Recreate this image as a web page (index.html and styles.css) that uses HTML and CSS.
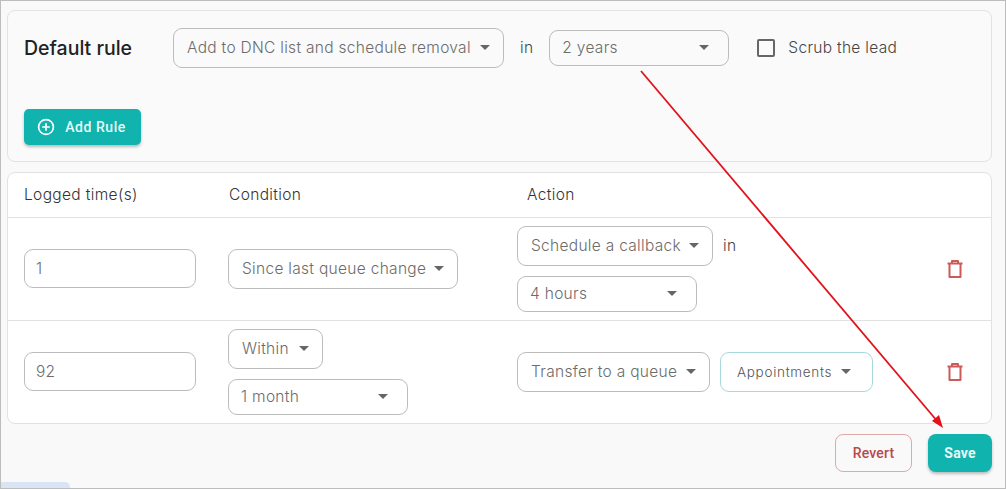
FILE: index.html
```html
<!DOCTYPE html>
<html lang="en">
<head>
    <meta charset="UTF-8">
    <meta name="viewport" content="width=device-width, initial-scale=1.0">
    <title>Default rule</title>
    <link rel="stylesheet" href="styles.css">
</head>
<body>

<div class="frame">
    <section class="card default-card">
        <div class="default-row">
            <h2 class="default-title">Default rule</h2>
            <div class="select select-dnc"><span>Add to DNC list and schedule removal</span><i class="caret"></i></div>
            <span class="word in-top">in</span>
            <div class="select select-years"><span>2 years</span><i class="caret"></i></div>
            <span class="checkbox"></span>
            <span class="word scrub">Scrub the lead</span>
        </div>
        <button type="button" class="button add-rule">
            <svg class="plus" width="18" height="18" viewBox="0 0 18 18" fill="none" stroke="#fff" stroke-width="1.7"><circle cx="9" cy="9" r="7.4"/><path d="M9 5.2v7.6M5.2 9h7.6"/></svg>
            Add Rule
        </button>
    </section>

    <section class="card rules-card">
        <div class="rule-grid rule-head">
            <span>Logged time(s)</span>
            <span class="condition-head">Condition</span>
            <span class="action-head">Action</span>
        </div>

        <div class="rule-grid rule-row">
            <div class="input">1</div>
            <div class="select select-since"><span>Since last queue change</span><i class="caret"></i></div>
            <div class="stack">
                <div class="inline">
                    <div class="select select-callback"><span>Schedule a callback</span><i class="caret"></i></div>
                    <span class="word in-row">in</span>
                </div>
                <div class="select select-period"><span>4 hours</span><i class="caret"></i></div>
            </div>
            <svg class="trash" width="18" height="20" viewBox="0 0 18 20" fill="none" stroke="#cc5a58" stroke-width="2" stroke-linejoin="round"><path d="M1.5 4.5h15M6 4V2h6v2M3.5 4.5V18h11V4.5"/></svg>
        </div>

        <div class="rule-grid rule-row">
            <div class="input">92</div>
            <div class="stack stack-wide">
                <div class="select select-within"><span>Within</span><i class="caret"></i></div>
                <div class="select select-period"><span>1 month</span><i class="caret"></i></div>
            </div>
            <div class="inline inline-wide">
                <div class="select select-transfer"><span>Transfer to a queue</span><i class="caret"></i></div>
                <div class="select select-queue"><span>Appointments</span><i class="caret"></i></div>
            </div>
            <svg class="trash" width="18" height="20" viewBox="0 0 18 20" fill="none" stroke="#cc5a58" stroke-width="2" stroke-linejoin="round"><path d="M1.5 4.5h15M6 4V2h6v2M3.5 4.5V18h11V4.5"/></svg>
        </div>
    </section>

    <div class="footer">
        <button type="button" class="button revert">Revert</button>
        <button type="button" class="button save">Save</button>
    </div>

    <div class="scroll-bit"></div>
</div>

<!-- annotation drawn over the screenshot -->
<svg class="arrow" width="1006" height="489" viewBox="0 0 1006 489" fill="none">
    <path d="M641 71L938 422" stroke="#e2111a" stroke-width="1.8"/>
    <path d="M943 428L932 421L939 415Z" fill="#e2111a"/>
</svg>

</body>
</html>
```

FILE: styles.css
```css
body {
    font-family: Inter, "Noto Sans", sans-serif;
    background-color: #fff;
    margin: 0;
    padding: 0;
    color: #333;
}

.frame {
    position: relative;
    box-sizing: border-box;
    width: 1006px;
    height: 489px;
    padding: 9px 13px 0 6px;
    background-color: #f9f9f9;
    border: 1px solid #bdbdbd;
    overflow: hidden;
}

.card {
    box-sizing: border-box;
    border: 1px solid #e2e2e2;
    border-radius: 8px;
}

.default-card {
    height: 152px;
    padding: 17px 16px 0;
    background-color: #fafafa;
}

.default-row {
    display: flex;
    align-items: center;
    height: 40px;
}

.default-title {
    width: 149px;
    margin: 0;
    padding-bottom: 1px;
    font-size: 19.5px;
    font-weight: 500;
    color: #222;
}

.word {
    padding-bottom: 2px;
    font-size: 15.5px;
    font-weight: 300;
    letter-spacing: 0.3px;
    color: #444;
}

.in-top {
    margin-left: 16px;
}

.scrub {
    margin-left: 13px;
}

.in-row {
    margin-left: 10px;
}

.select {
    box-sizing: border-box;
    display: flex;
    align-items: center;
    justify-content: space-between;
    height: 40px;
    padding: 0 13px 1px;
    background-color: transparent;
    border: 1px solid #bcbcbc;
    border-radius: 9px;
    font-size: 15.5px;
    font-weight: 300;
    letter-spacing: 0.3px;
    color: #6c6c6c;
}

.caret {
    width: 0;
    height: 0;
    border-left: 5px solid transparent;
    border-right: 5px solid transparent;
    border-top: 5px solid #666;
}

.select-dnc {
    width: 331px;
}

.select-years {
    width: 180px;
    height: 36px;
    margin-left: 16px;
    padding: 0 19px 1px 12px;
}

.select-since {
    width: 230px;
}

.select-callback {
    width: 196px;
}

.select-period {
    width: 180px;
    height: 36px;
    padding: 0 19px 1px 12px;
}

.select-within {
    width: 95px;
}

.select-transfer {
    width: 193px;
}

.select-queue {
    width: 153px;
    padding: 0 21px 1px 16px;
    border-color: #a8d8dc;
    font-size: 13.5px;
    letter-spacing: 0.7px;
    color: #555;
}

.checkbox {
    box-sizing: border-box;
    width: 18px;
    height: 18px;
    margin-left: 28px;
    border: 2px solid #666;
    border-radius: 2px;
}

.button {
    box-sizing: border-box;
    display: inline-flex;
    align-items: center;
    justify-content: center;
    font-family: Roboto, sans-serif;
    font-size: 14px;
    font-weight: 500;
    letter-spacing: 0.2px;
    border: none;
    border-radius: 5px;
    cursor: pointer;
}

.add-rule {
    width: 117px;
    height: 36px;
    margin-top: 41px;
    padding-right: 8px;
    gap: 10px;
    background-color: #10b3ad;
    color: #e8fbfa;
    letter-spacing: 0.55px;
    box-shadow: 0 2px 3px rgba(0, 0, 0, 0.25);
}

.rules-card {
    height: 252px;
    margin-top: 10px;
    background-color: #fff;
}

.rule-grid {
    box-sizing: border-box;
    display: grid;
    grid-template-columns: 204px 289px 1fr 18px;
    padding: 0 27px 0 16px;
    align-items: center;
}

.rule-head {
    height: 44px;
    padding-bottom: 2px;
    font-size: 15.5px;
    font-weight: 300;
    letter-spacing: 0.35px;
    color: #333;
}

.condition-head {
    padding-left: 1px;
}

.action-head {
    padding-left: 10px;
}

.rule-row {
    height: 103px;
    border-top: 1px solid #e2e2e2;
}

.input {
    box-sizing: border-box;
    display: flex;
    align-items: center;
    width: 172px;
    height: 39px;
    margin-bottom: 1px;
    padding: 0 11px 1px;
    border: 1px solid #bcbcbc;
    border-radius: 9px;
    font-size: 15.5px;
    font-weight: 300;
    letter-spacing: 0.3px;
    color: #6c6c6c;
}

.stack {
    display: flex;
    flex-direction: column;
    gap: 10px;
}

.inline {
    display: flex;
    align-items: center;
}

.inline-wide {
    gap: 10px;
}

.footer {
    display: flex;
    justify-content: flex-end;
    gap: 16px;
    margin-top: 10px;
}

.revert {
    width: 77px;
    height: 38px;
    background-color: transparent;
    border: 1px solid #dda9a9;
    border-radius: 8px;
    color: #b9484a;
}

.save {
    width: 64px;
    height: 38px;
    background-color: #10b3ad;
    border-radius: 8px;
    color: #e8fbfa;
    font-weight: 700;
    box-shadow: 0 2px 3px rgba(0, 0, 0, 0.25);
}

.scroll-bit {
    position: absolute;
    left: 0;
    bottom: 0;
    width: 69px;
    height: 6px;
    background-color: #d9e4f5;
    border-top-right-radius: 5px;
}

.arrow {
    position: absolute;
    left: 0;
    top: 0;
    pointer-events: none;
}
```
